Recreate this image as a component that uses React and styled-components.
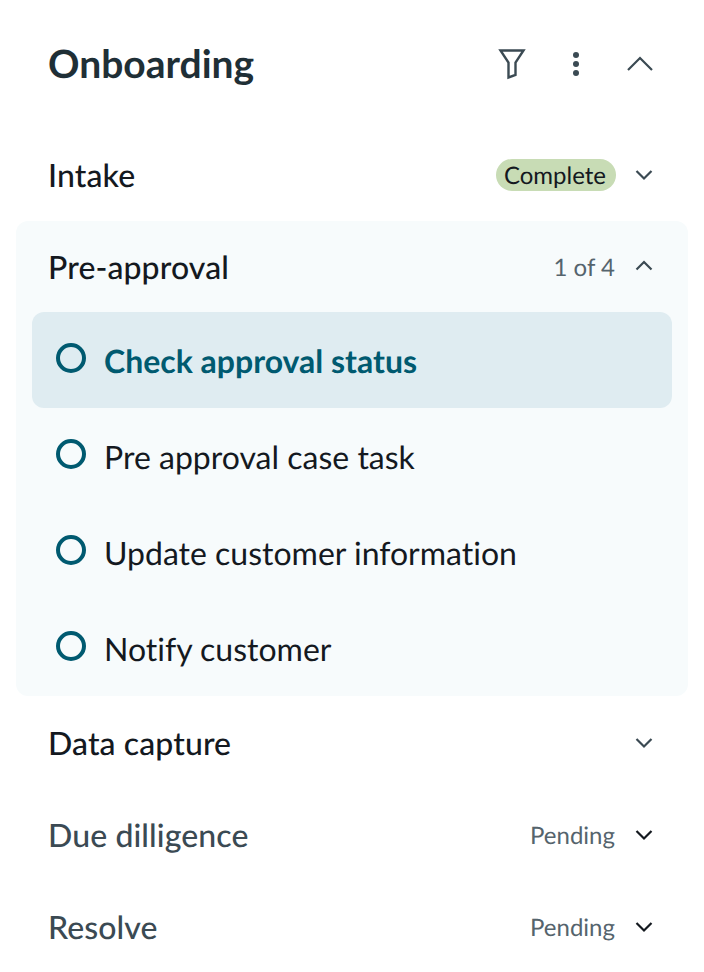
import React from "react";
import styled, { createGlobalStyle } from "styled-components";

const GlobalStyle = createGlobalStyle`
  html, body {
    margin: 0;
    background: #ffffff;
    font-family: Lato, "Open Sans", sans-serif;
    font-variant-ligatures: none;
    text-rendering: geometricPrecision;
  }
`;

const Page = styled.div`
  width: 704px;
  height: 972px;
  padding: 0 16px;
  box-sizing: border-box;
  overflow: hidden;
`;

const Header = styled.header`
  height: 129px;
  padding: 0 32px;
  box-sizing: border-box;
  display: flex;
  align-items: center;
  justify-content: space-between;
`;

const Title = styled.h1`
  margin: -1px 0 0;
  font-size: 39px;
  font-weight: 700;
  color: #1f2f36;
`;

const Toolbar = styled.div`
  display: flex;
  align-items: center;
  gap: 32px;
  margin-top: -2px;
`;

const IconButton = styled.button`
  width: 32px;
  height: 32px;
  padding: 0;
  border: 0;
  background: none;
  display: flex;
  align-items: center;
  justify-content: center;
  color: #3b4a53;
`;

const Row = styled.div`
  height: 92px;
  padding: 0 32px;
  box-sizing: border-box;
  display: flex;
  align-items: center;
  justify-content: space-between;
`;

const RowLabel = styled.span`
  font-size: 32px;
  font-weight: 500;
  letter-spacing: 0.1px;
  margin-top: -1px;
  color: ${(p) => (p.$muted ? "#3b4a53" : "#14191f")};
`;

const RowMeta = styled.div`
  display: flex;
  align-items: center;
  gap: 17px;
`;

const Status = styled.span`
  font-size: 24px;
  color: #55646d;
`;

const Badge = styled.span`
  height: 32px;
  margin: -1px -1px 0 0;
  padding: 0 10px 0 8px;
  border-radius: 16px;
  background: #c8dcb5;
  color: #14191f;
  font-size: 24px;
  line-height: 34px;
`;

const Panel = styled.section`
  height: 475px;
  padding: 0 16px;
  margin-bottom: 1px;
  box-sizing: border-box;
  border-radius: 12px;
  background: #f7fbfc;
`;

const PanelHeader = styled(Row)`
  padding: 0 16px;
  margin-bottom: -1px;
`;

const Task = styled.div`
  height: 96px;
  padding: 0 24px;
  box-sizing: border-box;
  display: flex;
  align-items: center;
  gap: 18px;
  border-radius: 12px;
  background: ${(p) => (p.$active ? "#dfecf1" : "transparent")};
  color: ${(p) => (p.$active ? "#005a70" : "#14191f")};
  font-size: 32px;
  font-weight: ${(p) => (p.$active ? 700 : 400)};
`;

const Circle = styled.span`
  width: 30px;
  height: 30px;
  box-sizing: border-box;
  border: 4px solid #005a70;
  border-radius: 50%;
  flex: none;
  margin-top: -4px;
`;

const Chevron = ({ up, color = "#3b4a53" }) => (
  <svg width="24" height="24" viewBox="0 0 24 24" fill="none">
    <path d={up ? "M4.5 14.5L12 7L19.5 14.5" : "M4.5 8L12 15.5L19.5 8"} stroke={color} strokeWidth="2.2" />
  </svg>
);

const tasks = [
  "Check approval status",
  "Pre approval case task",
  "Update customer information",
  "Notify customer",
];

export default function App() {
  return (
    <Page>
      <GlobalStyle />
      <Header>
        <Title>Onboarding</Title>
        <Toolbar>
          <IconButton aria-label="Filter">
            <svg width="28" height="32" viewBox="0 0 28 32" fill="none">
              <path d="M2.5 2.5H25.5L17.5 14.5V27L10.5 29.5V14.5Z" stroke="#3b4a53" strokeWidth="2.4" />
            </svg>
          </IconButton>
          <IconButton aria-label="More">
            <svg width="10" height="26" viewBox="0 0 10 26" fill="#3b4a53">
              <circle cx="5" cy="4" r="3" />
              <circle cx="5" cy="13" r="3" />
              <circle cx="5" cy="22" r="3" />
            </svg>
          </IconButton>
          <IconButton aria-label="Collapse">
            <svg width="28" height="18" viewBox="0 0 28 18" fill="none">
              <path d="M2 15L14 3L26 15" stroke="#3b4a53" strokeWidth="2.2" />
            </svg>
          </IconButton>
        </Toolbar>
      </Header>

      <Row>
        <RowLabel>Intake</RowLabel>
        <RowMeta>
          <Badge>Complete</Badge>
          <Chevron />
        </RowMeta>
      </Row>

      <Panel>
        <PanelHeader>
          <RowLabel>Pre-approval</RowLabel>
          <RowMeta>
            <Status>1 of 4</Status>
            <Chevron up />
          </RowMeta>
        </PanelHeader>
        {tasks.map((task, i) => (
          <Task key={task} $active={i === 0}>
            <Circle />
            {task}
          </Task>
        ))}
      </Panel>

      <Row>
        <RowLabel>Data capture</RowLabel>
        <Chevron />
      </Row>
      <Row>
        <RowLabel $muted>Due dilligence</RowLabel>
        <RowMeta>
          <Status>Pending</Status>
          <Chevron color="#14191f" />
        </RowMeta>
      </Row>
      <Row>
        <RowLabel $muted>Resolve</RowLabel>
        <RowMeta>
          <Status>Pending</Status>
          <Chevron color="#14191f" />
        </RowMeta>
      </Row>
    </Page>
  );
}
